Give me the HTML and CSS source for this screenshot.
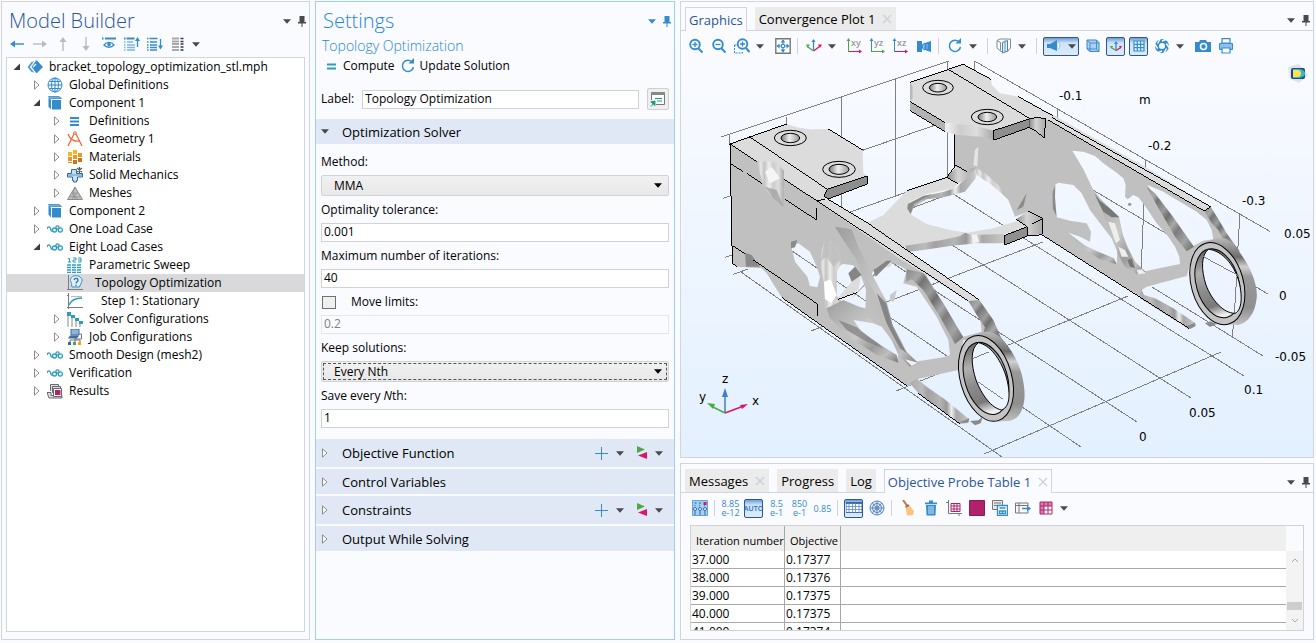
FILE: index.html
```html
<!DOCTYPE html>
<html lang="en">
<head>
<meta charset="utf-8">
<title>bracket_topology_optimization_stl.mph</title>
<link rel="stylesheet" href="styles.css">
</head>
<body>
<svg class="defs" aria-hidden="true">
  <defs>
    <symbol id="caret" viewBox="0 0 9 5"><path d="M0 0h9L4.500 5z" fill="currentColor"/></symbol>
    <symbol id="pin" viewBox="0 0 8 11"><path d="M1.500 0h5v6H8v1.500H0V6h1.500zM3.500 7h1v4h-1z" fill="currentColor"/></symbol>
    <symbol id="closed" viewBox="0 0 8 10"><path d="M1.500 .8v8.400L6 5z" fill="#fff" stroke="#8c8c8c"/></symbol>
    <symbol id="open" viewBox="0 0 8 10"><path d="M7 1.500V8H.5z" fill="#3c3c3c"/></symbol>
    <symbol id="cube" viewBox="0 0 16 16"><path d="M5 5h9v9.500H5z" fill="#348ccd"/><path d="M1.500 2 4 4.500V14.500L1.500 11.500z" fill="#348ccd"/><path d="M1.500 1.500H12L14.500 3.500H4z" fill="#6fb0e0" stroke="#348ccd" stroke-width=".8"/></symbol>
    <symbol id="study" viewBox="0 0 16 16"><path d="M0 8C.5 5.500 3 5 3.700 8S5 10.500 5.700 9" fill="none" stroke="#2a9fbc" stroke-width="1.300"/><circle cx="7.500" cy="9" r="2" fill="none" stroke="#2a9fbc" stroke-width="1.300"/><circle cx="10.500" cy="6.500" r="1.600" fill="none" stroke="#2a9fbc" stroke-width="1.300"/><circle cx="13.300" cy="9" r="2.100" fill="none" stroke="#2a9fbc" stroke-width="1.300"/></symbol>
    <symbol id="plus" viewBox="0 0 13 13"><path d="M6.500 0v13M0 6.500h13" stroke="#348ccd"/></symbol>
    <symbol id="swap" viewBox="0 0 10 14"><path d="M0 0v7l8-3.500z" fill="#4fa847"/><path d="M10 6v7L1 9.500z" fill="#dc1467"/></symbol>
    <symbol id="cross" viewBox="0 0 10 10"><path d="m1 1 8 8m0-8-8 8" stroke="#c8d1dd" stroke-width="1.300"/></symbol>
    <symbol id="refresh" viewBox="0 0 16 16"><path d="M12.500 4.500A5.600 5.600 0 1 0 13.500 9" fill="none" stroke="#348ccd" stroke-width="1.500"/><path d="M8.500 5.500H14V0z" fill="#348ccd"/></symbol>
    <linearGradient id="wall" x1="0" y1="0" x2="0" y2="1"><stop offset="0" stop-color="#666"/><stop offset=".3" stop-color="#b0b0b0"/><stop offset=".55" stop-color="#8c8c8c"/><stop offset=".8" stop-color="#7a7a7a"/><stop offset=".95" stop-color="#eee"/></linearGradient>
    <linearGradient id="outer" x1="0" y1="0" x2="0" y2="1"><stop offset="0" stop-color="#b8b8b8"/><stop offset=".22" stop-color="#6d6d6d"/><stop offset=".33" stop-color="#d0d0d0"/><stop offset=".45" stop-color="#999"/><stop offset=".8" stop-color="#8f8f8f"/><stop offset="1" stop-color="#c0c0c0"/></linearGradient>
    <linearGradient id="bore"><stop offset="0" stop-color="#777"/><stop offset=".45" stop-color="#eee"/><stop offset=".7" stop-color="#c8c8c8"/><stop offset="1" stop-color="#999"/></linearGradient>
    <linearGradient id="rough" x1="0" y1="0" x2="1" y2="0"><stop offset="0" stop-color="#b4b4b4"/><stop offset=".15" stop-color="#e8e8e8"/><stop offset=".28" stop-color="#c4c4c4"/><stop offset=".45" stop-color="#eee"/><stop offset=".6" stop-color="#cdcdcd"/><stop offset=".8" stop-color="#ddd"/><stop offset="1" stop-color="#aaa"/></linearGradient>
    <linearGradient id="rim"><stop offset="0" stop-color="#aaa"/><stop offset=".2" stop-color="#bcbcbc"/><stop offset=".3" stop-color="#a2a2a2"/><stop offset=".5" stop-color="#b5b5b5"/><stop offset=".62" stop-color="#999"/><stop offset=".7" stop-color="#eee"/><stop offset=".78" stop-color="#a8a8a8"/><stop offset="1" stop-color="#c8c8c8"/></linearGradient>
    <linearGradient id="bands" x1="0" y1="0" x2="1" y2="1"><stop offset="0" stop-color="#8a8a8a"/><stop offset=".15" stop-color="#a8a8a8"/><stop offset=".22" stop-color="#757575"/><stop offset=".36" stop-color="#9c9c9c"/><stop offset=".45" stop-color="#6f6f6f"/><stop offset=".57" stop-color="#a9a9a9"/><stop offset=".66" stop-color="#7c7c7c"/><stop offset=".82" stop-color="#a4a4a4"/><stop offset="1" stop-color="#666"/></linearGradient>
    <linearGradient id="brace" x1="0" y1="0" x2="1" y2="1"><stop offset="0" stop-color="#9c9c9c"/><stop offset=".25" stop-color="#b5b5b5"/><stop offset=".5" stop-color="#cacaca"/><stop offset=".7" stop-color="#9a9a9a"/><stop offset=".85" stop-color="#bfbfbf"/><stop offset="1" stop-color="#777"/></linearGradient>
    <linearGradient id="fillet"><stop offset="0" stop-color="#8b8b8b"/><stop offset=".4" stop-color="#d4d4d4"/><stop offset="1" stop-color="#a9a9a9"/></linearGradient>
  </defs>
</svg>

<main class="desktop">

<section class="panel builder" aria-label="Model Builder">
  <header class="title-row"><h1 class="title">Model Builder</h1>
    <button class="mini" aria-label="Menu"><svg class="caret"><use href="#caret"/></svg></button>
    <button class="mini" aria-label="Pin"><svg class="pin"><use href="#pin"/></svg></button></header>
  <div class="toolbar small-bar">
    <button class="tool" aria-label="Back"><svg class="i16" viewBox="0 0 16 16"><path d="M3 8h12" stroke="#348ccd" stroke-width="1.400"/><path d="M1 8l5-3.500v7z" fill="#348ccd"/></svg></button>
    <button class="tool" aria-label="Forward"><svg class="i16" viewBox="0 0 16 16"><path d="M1 8h12" stroke="#b9babf" stroke-width="1.400"/><path d="M15 8l-5-3.500v7z" fill="#b9babf"/></svg></button>
    <button class="tool" aria-label="Up"><svg class="i16" viewBox="0 0 16 16"><path d="M8 3v12" stroke="#b9babf" stroke-width="1.400"/><path d="M8 1l3.500 5h-7z" fill="#b9babf"/></svg></button>
    <button class="tool" aria-label="Down"><svg class="i16" viewBox="0 0 16 16"><path d="M8 1v12" stroke="#b9babf" stroke-width="1.400"/><path d="M8 15l3.500-5h-7z" fill="#b9babf"/></svg></button>
    <button class="tool" aria-label="Show"><svg class="i16" viewBox="0 0 16 16"><path d="M1 2.500h1.500m1.500 0h11" stroke="#348ccd" stroke-width="2"/><path d="M3 9c2.500-3.500 7.500-3.500 10 0-2.500 3-7.500 3-10 0z" fill="#fff" stroke="#348ccd" stroke-width="1.300"/><circle cx="8" cy="8.500" r="1.800" fill="#348ccd"/></svg></button>
    <button class="tool" aria-label="Collapse All"><svg class="i16" viewBox="0 0 16 16"><path d="M0 2.500h1.500m1 0h8" stroke="#348ccd" stroke-width="2"/><path d="M0 6h1.500M0 9h1.500M0 11.500h1.500M0 14h1.500M3 6h6M3 9h8M3 11.500h8M3 14h8" stroke="#7fb7e0" stroke-width="1.300"/><path d="M13.500 11V3" stroke="#348ccd" stroke-width="1.300"/><path d="M13.500 1 16 5h-5z" fill="#348ccd"/></svg></button>
    <button class="tool" aria-label="Expand All"><svg class="i16" viewBox="0 0 16 16"><path d="M0 2.500h1.500m1 0h8M0 6h1.500M0 9h1.500M0 11.500h1.500M0 14h1.500M3 6h7M3 9h7M3 11.500h7M3 14h7" stroke="#348ccd" stroke-width="1.400"/><path d="M13.500 3v9" stroke="#348ccd" stroke-width="1.300"/><path d="M13.500 13.500 16 9.500h-5z" fill="#348ccd"/></svg></button>
    <button class="tool" aria-label="Node Text"><svg class="i16" viewBox="0 0 16 16"><path d="M2 2.500h7M2 5.500h7M2 8h7M2 11h7M2 14h7" stroke="#aaa" stroke-width="1.800"/><path d="M10.500 2.500h3M10.500 5.500h3M10.500 8h3M10.500 11h3M10.500 14h3" stroke="#2c3e57" stroke-width="1.500"/></svg></button>
    <button class="drop" aria-label="More"><svg class="caret"><use href="#caret"/></svg></button>
  </div>
  <ul class="tree">
    <li class="node"><button class="twist" aria-label="Collapse"><svg class="arrow"><use href="#open"/></svg></button><svg class="i16" viewBox="0 0 16 16"><path d="M8 1.500h2L16 8l-6 6H8L2 8z" fill="#348ccd"/><path d="M.5 8l4-5 2.500-.5v4L5 8l2 1.500v4L4.500 13z" fill="#4f9dd6"/><path d="M8.500 1.500 3.500 8l5 6M6 8l3-3" stroke="#fff" stroke-width="1.200" fill="none"/></svg><span class="name">bracket_topology_optimization_stl.mph</span></li>
    <li class="node lvl1"><button class="twist" aria-label="Expand"><svg class="arrow"><use href="#closed"/></svg></button><svg class="i16" viewBox="0 0 16 16"><circle cx="8" cy="8" r="7" fill="#eef6fd" stroke="#348ccd"/><ellipse cx="8" cy="8" rx="3.500" ry="7" fill="none" stroke="#348ccd"/><path d="M8 1v14M1 8h14M2.500 4.500h11M2.500 11.500h11" stroke="#348ccd"/></svg><span class="name">Global Definitions</span></li>
    <li class="node lvl1"><button class="twist" aria-label="Collapse"><svg class="arrow"><use href="#open"/></svg></button><svg class="i16"><use href="#cube"/></svg><span class="name">Component 1</span></li>
    <li class="node lvl2"><button class="twist" aria-label="Expand"><svg class="arrow"><use href="#closed"/></svg></button><svg class="i16" viewBox="0 0 16 16"><path d="M3 5h9M3 8.500h9M3 12h9" stroke="#348ccd" stroke-width="1.800"/></svg><span class="name">Definitions</span></li>
    <li class="node lvl2"><button class="twist" aria-label="Expand"><svg class="arrow"><use href="#closed"/></svg></button><svg class="i16" viewBox="0 0 16 16"><path d="M1 15 7.500 2M8.500 2 15 15M1 3c2 5 6 8 12 7" fill="none" stroke="#ee6a3a" stroke-width="1.300"/><circle cx="8" cy="2" r="1.300" fill="#fff" stroke="#ee6a3a"/></svg><span class="name">Geometry 1</span></li>
    <li class="node lvl2"><button class="twist" aria-label="Expand"><svg class="arrow"><use href="#closed"/></svg></button><svg class="i16" viewBox="0 0 16 16"><path d="M6 1h4v4H6zM1 3h4v4H1z" fill="#fab41e"/><path d="M11 4h4v4h-4zM6 6h4v4H6zM1 8h4v4H1z" fill="#f2951e"/><path d="M11 9h4v4h-4zM6 11h4v4H6z" fill="#cf741c"/><path d="M1 13h4v1H1z" fill="#e08a20"/></svg><span class="name">Materials</span></li>
    <li class="node lvl2"><button class="twist" aria-label="Expand"><svg class="arrow"><use href="#closed"/></svg></button><svg class="i16" viewBox="0 0 16 16"><path d="M4.500 2.500h5v4h6V10h-5v3.500h-1V15h-3v-1.500h-1V10H.5V6.500h4z" fill="#c7ddf0" stroke="#2a6aa5"/><path d="M1 8h14" stroke="#7fb0da" stroke-width="1.500"/><path d="M12.500 0v6M10 1l5 4M10 5l5-4" stroke="#555" stroke-width="1.200"/></svg><span class="name">Solid Mechanics</span></li>
    <li class="node lvl2"><button class="twist" aria-label="Expand"><svg class="arrow"><use href="#closed"/></svg></button><svg class="i16" viewBox="0 0 16 16"><path d="M8 2 15.500 14.500H.5z" fill="#c0c0c0" stroke="#8c8c8c"/><path d="M5 8l6 0M2.500 11.500l11 .5M8 2 6 8l4 6M10 8l-5 6M5 8l3 6" stroke="#909090" fill="none" stroke-width=".8"/></svg><span class="name">Meshes</span></li>
    <li class="node lvl1"><button class="twist" aria-label="Expand"><svg class="arrow"><use href="#closed"/></svg></button><svg class="i16"><use href="#cube"/></svg><span class="name">Component 2</span></li>
    <li class="node lvl1"><button class="twist" aria-label="Expand"><svg class="arrow"><use href="#closed"/></svg></button><svg class="i16"><use href="#study"/></svg><span class="name">One Load Case</span></li>
    <li class="node lvl1"><button class="twist" aria-label="Collapse"><svg class="arrow"><use href="#open"/></svg></button><svg class="i16"><use href="#study"/></svg><span class="name">Eight Load Cases</span></li>
    <li class="node lvl2"><span class="twist"></span><svg class="i16" viewBox="0 0 16 16"><path d="M1 1.500h1.500V5M1 5h3M6 1h3v2H6v2h3M11 1h3v4h-3M11 3h3" fill="none" stroke="#2a9fbc"/><path d="M0 8h4M0 10.500h4M0 13h4M0 15.500h4M5 8h4M5 10.500h4M5 13h4M5 15.500h4M10 8h4M10 10.500h4M10 13h4M10 15.500h4" stroke="#2a9fbc" stroke-width="1.500"/></svg><span class="name">Parametric Sweep</span></li>
    <li class="node lvl2 selected"><span class="twist"></span><svg class="i16" viewBox="0 0 16 16"><path d="M1.500 0v14.500H16M0 14.500h2" fill="none" stroke="#7c7c7c"/><path d="M5.500 1.500c3-1.500 8-1 9.500 3 .5 3-2 4.500-2.500 7.500H5c-1-1 .5-3-1-5s0-4 1.500-5.500z" fill="#e4f1fb" stroke="#348ccd"/><path d="M7 5c.5-2.500 4.500-2 4 .5C10.700 7 9 6.800 9 8.500M9 9.700v1.300" fill="none" stroke="#2a6db5" stroke-width="1.300"/></svg><span class="name step1">Topology Optimization</span></li>
    <li class="node lvl2"><span class="twist"></span><svg class="i16" viewBox="0 0 16 16"><path d="M1.500 0v16M0 14.500h16M0 2.500h2" fill="none" stroke="#7c7c7c"/><path d="M2 12C4 7 8 5 15 5" fill="none" stroke="#2a9fbc" stroke-width="1.400"/><path d="M4 3.500h11" stroke="#bbb"/></svg><span class="name step2">Step 1: Stationary</span></li>
    <li class="node lvl2"><button class="twist" aria-label="Expand"><svg class="arrow"><use href="#closed"/></svg></button><svg class="i16" viewBox="0 0 16 16"><path d="M1 5v11M5 6v10M9 9v7M13 12v4" stroke="#888"/><path d="M0 1h4v4H0zM4 4h4v3H4zM8 7h4v3H8zM12 10h4v3h-4z" fill="#2a9fbc"/></svg><span class="name">Solver Configurations</span></li>
    <li class="node lvl2"><button class="twist" aria-label="Expand"><svg class="arrow"><use href="#closed"/></svg></button><svg class="i16" viewBox="0 0 16 16"><path d="M4 0h8v6H4z" fill="#8fb3de" stroke="#3f6ca6"/><path d="M3 6.500h9l-2 3H1z" fill="#3f6ca6"/><path d="M12 5h2.500v5H8M3 13v-2h10v2M8 9v4" fill="none" stroke="#777"/><path d="M1 13h3v3H1z" fill="#2d6cb0"/><path d="M6 13h3v3H6z" fill="#4fa847"/><path d="M11 13h3v3h-3z" fill="#f5a21b"/></svg><span class="name">Job Configurations</span></li>
    <li class="node lvl1"><button class="twist" aria-label="Expand"><svg class="arrow"><use href="#closed"/></svg></button><svg class="i16"><use href="#study"/></svg><span class="name">Smooth Design (mesh2)</span></li>
    <li class="node lvl1"><button class="twist" aria-label="Expand"><svg class="arrow"><use href="#closed"/></svg></button><svg class="i16"><use href="#study"/></svg><span class="name">Verification</span></li>
    <li class="node lvl1"><button class="twist" aria-label="Expand"><svg class="arrow"><use href="#closed"/></svg></button><svg class="i16" viewBox="0 0 16 16"><path d="M3.500 8V1.500h8V3M5.500 10V3.500h8V5M0 9.500h4v3h11v2.500H2z" fill="#ddd" stroke="#6a6a6a"/><path d="M6.500 5.500h8v8h-8z" fill="#fff" stroke="#6a6a6a"/><path d="M8 7h5.500v5H8z" fill="#b0226b"/></svg><span class="name">Results</span></li>
  </ul>
</section>

<section class="panel settings" aria-label="Settings">
  <header class="title-row"><h2 class="title">Settings</h2>
    <button class="mini" aria-label="Menu"><svg class="caret"><use href="#caret"/></svg></button>
    <button class="mini" aria-label="Pin"><svg class="pin"><use href="#pin"/></svg></button></header>
  <p class="subtitle">Topology Optimization</p>
  <div class="actions">
    <button class="action"><svg class="i16" viewBox="0 0 16 16"><path d="M4 6.500h9M4 10.500h9" stroke="#2a9fbc" stroke-width="2"/></svg>Compute</button>
    <button class="action"><svg class="i16"><use href="#refresh"/></svg>Update Solution</button>
  </div>
  <div class="label-row"><label for="lbl">Label:</label><input class="field" id="lbl" value="Topology Optimization">
    <button class="goto" aria-label="Go to source"><svg class="i16" viewBox="0 0 16 16"><path d="M1.500 9V1.500h13v12H6" fill="#fff" stroke="#777"/><path d="M1 1h14v3H1z" fill="#888"/><path d="M5 7.500h7M7 10h5" stroke="#1a9e86" stroke-width="1.200"/><path d="M1 15.500l3.500-4M5 10v4.500L.8 10.800z" stroke="#1a9e86" fill="#1a9e86"/></svg></button></div>
  <h3 class="section open"><button class="fold" aria-label="Collapse section"><svg class="caret"><use href="#caret"/></svg></button>Optimization Solver</h3>
  <form class="form">
    <label for="method">Method:</label>
    <div class="pick"><select id="method"><option>MMA</option></select><svg class="caret"><use href="#caret"/></svg></div>
    <label for="tol">Optimality tolerance:</label>
    <input class="field" id="tol" value="0.001">
    <label for="iter">Maximum number of iterations:</label>
    <input class="field" id="iter" value="40">
    <label class="check"><input type="checkbox" class="box">Move limits:</label>
    <input class="field" aria-label="Move limits" value="0.2" disabled>
    <label for="keep">Keep solutions:</label>
    <div class="pick focused"><select id="keep"><option>Every Nth</option></select><svg class="caret"><use href="#caret"/></svg></div>
    <label for="save">Save every <i>N</i>th:</label>
    <input class="field" id="save" value="1">
  </form>
  <div class="sections">
    <h3 class="section tall"><button class="fold" aria-label="Expand section"><svg class="arrow"><use href="#closed"/></svg></button>Objective Function
      <span class="extras"><button class="bare" aria-label="Add"><svg class="plus"><use href="#plus"/></svg></button><button class="bare" aria-label="Add menu"><svg class="caret"><use href="#caret"/></svg></button><button class="bare swap-btn" aria-label="Replace"><svg class="swap"><use href="#swap"/></svg></button><button class="bare" aria-label="Replace menu"><svg class="caret"><use href="#caret"/></svg></button></span></h3>
    <h3 class="section"><button class="fold" aria-label="Expand section"><svg class="arrow"><use href="#closed"/></svg></button>Control Variables</h3>
    <h3 class="section tall"><button class="fold" aria-label="Expand section"><svg class="arrow"><use href="#closed"/></svg></button>Constraints
      <span class="extras"><button class="bare" aria-label="Add"><svg class="plus"><use href="#plus"/></svg></button><button class="bare" aria-label="Add menu"><svg class="caret"><use href="#caret"/></svg></button><button class="bare swap-btn" aria-label="Replace"><svg class="swap"><use href="#swap"/></svg></button><button class="bare" aria-label="Replace menu"><svg class="caret"><use href="#caret"/></svg></button></span></h3>
    <h3 class="section"><button class="fold" aria-label="Expand section"><svg class="arrow"><use href="#closed"/></svg></button>Output While Solving</h3>
  </div>
</section>

<div class="right">
<section class="panel graphics" aria-label="Graphics">
  <header class="tabs">
    <button class="tab active">Graphics</button>
    <button class="tab">Convergence Plot 1<svg class="cross"><use href="#cross"/></svg></button>
    <span class="tab-tools"><button class="mini" aria-label="Menu"><svg class="caret"><use href="#caret"/></svg></button>
    <button class="mini" aria-label="Pin"><svg class="pin"><use href="#pin"/></svg></button></span>
  </header>
  <div class="toolbar">
    <button class="tool" aria-label="Zoom In"><svg class="i16" viewBox="0 0 16 16"><circle cx="7" cy="6.500" r="4.800" fill="none" stroke="#348ccd" stroke-width="1.900"/><path d="M10.500 10.500l4 4" stroke="#348ccd" stroke-width="2"/><path d="M7 4v5M4.500 6.500h5" stroke="#348ccd" stroke-width="1.300"/></svg></button>
    <button class="tool" aria-label="Zoom Out"><svg class="i16" viewBox="0 0 16 16"><circle cx="7" cy="6.500" r="4.800" fill="none" stroke="#348ccd" stroke-width="1.900"/><path d="M10.500 10.500l4 4" stroke="#348ccd" stroke-width="2"/><path d="M4.500 6.500h5" stroke="#348ccd" stroke-width="1.300"/></svg></button>
    <button class="tool" aria-label="Zoom Box"><svg class="i16" viewBox="0 0 16 16"><path d="M.5 7v8h8v-2M.5 7H3" fill="none" stroke="#348ccd" stroke-dasharray="2 1"/><circle cx="8.500" cy="6" r="4.800" fill="#fff" stroke="#348ccd" stroke-width="1.900"/><path d="M12 10l3.500 4" stroke="#348ccd" stroke-width="2"/><path d="M8.500 3.500v5M6 6h5" stroke="#348ccd" stroke-width="1.300"/></svg></button>
    <button class="drop" aria-label="Zoom options"><svg class="caret"><use href="#caret"/></svg></button>
    <button class="tool" aria-label="Zoom Extents"><svg class="i16" viewBox="0 0 16 16"><path d="M.8.8h14.400v14.400H.8z" fill="#fff" stroke="#777" stroke-width="1.400"/><path d="M8 2v12M2 8h12" stroke="#348ccd" stroke-width="1.200" stroke-dasharray="4 4"/><path d="M8 1.500l2.500 3h-5zM8 14.500l2.500-3h-5zM1.500 8l3-2.500v5zM14.500 8l-3-2.500v5z" fill="#348ccd"/><path d="M6.500 6.500h3v3h-3z" fill="none" stroke="#348ccd"/></svg></button>
    <span class="sep"></span>
    <button class="tool" aria-label="Default View"><svg class="i16" viewBox="0 0 16 16"><path d="M7.500 12V2" stroke="#348ccd" stroke-width="1.300"/><path d="M7.500 1l2 3h-4z" fill="#348ccd"/><path d="M7.500 13 2 9" stroke="#4fa847" stroke-width="1.300"/><path d="M0 6.500h4L1.500 10z" fill="#4fa847"/><path d="M7.500 13l6-4.500" stroke="#dc1467" stroke-width="1.300"/><path d="M16 6.500h-4L14 10z" fill="#dc1467"/></svg></button>
    <button class="drop" aria-label="View options"><svg class="caret"><use href="#caret"/></svg></button>
    <button class="tool plane" aria-label="View xy"><svg class="i16" viewBox="0 0 16 16"><path d="M1.500 14V2" stroke="#4fa847"/><path d="M1.500 0l2 3h-4z" fill="#4fa847"/><path d="M2 13.500h10" stroke="#dc1467"/><path d="M15 13.500l-3-2v4z" fill="#dc1467"/><text x="4" y="8" class="mark">xy</text></svg></button>
    <button class="tool plane" aria-label="View yz"><svg class="i16" viewBox="0 0 16 16"><path d="M1.500 14V2" stroke="#348ccd"/><path d="M1.500 0l2 3h-4z" fill="#348ccd"/><path d="M2 13.500h10" stroke="#4fa847"/><path d="M15 13.500l-3-2v4z" fill="#4fa847"/><text x="4" y="8" class="mark">yz</text></svg></button>
    <button class="tool plane" aria-label="View xz"><svg class="i16" viewBox="0 0 16 16"><path d="M1.500 14V2" stroke="#348ccd"/><path d="M1.500 0l2 3h-4z" fill="#348ccd"/><path d="M2 13.500h10" stroke="#dc1467"/><path d="M15 13.500l-3-2v4z" fill="#dc1467"/><text x="4" y="8" class="mark">xz</text></svg></button>
    <button class="tool" aria-label="Camera view"><svg class="i16" viewBox="0 0 16 16"><path d="M1 3h5v11H1z" fill="#348ccd"/><path d="M6.500 6.500 9 5v7l-2.500-1.500z" fill="#8cc1e8" stroke="#348ccd"/><path d="M9 5l6-2v11l-6-2z" fill="#348ccd"/><path d="M11 6v5" stroke="#8cc1e8"/></svg></button>
    <span class="sep"></span>
    <button class="tool" aria-label="Rotate"><svg class="i16"><use href="#refresh"/></svg></button>
    <button class="drop" aria-label="Rotate options"><svg class="caret"><use href="#caret"/></svg></button>
    <span class="sep"></span>
    <button class="tool" aria-label="Clipping"><svg class="i16" viewBox="0 0 16 16"><path d="M1 2.500 4 1h10.500v9l-3 3.500H5L1 10zM1 2.500l3.500 2v8" fill="none" stroke="#8a8a8a"/><path d="M6.500 4.500l5-2V13l-5 2z" fill="#e4f1fb" stroke="#348ccd"/><path d="M9 2.500v12" stroke="#8a8a8a"/></svg></button>
    <button class="drop" aria-label="Clipping options"><svg class="caret"><use href="#caret"/></svg></button>
    <span class="sep"></span>
    <button class="tool on wide" aria-label="Scene Light"><svg class="i16" viewBox="0 0 16 16"><path d="M1 6h3l7-4v11L4 10H1z" fill="#348ccd"/><path d="M12 4c2.500 1 2.500 6 0 7" fill="#fff" stroke="#8cc1e8"/></svg><svg class="caret"><use href="#caret"/></svg></button>
    <button class="tool" aria-label="Transparency"><svg class="i16" viewBox="0 0 16 16"><path d="M2 2h9.500L14 4.500v9H5L2 11z" fill="#aecff0" stroke="#348ccd"/><path d="M2 2l3 3h9M5 5v8.500M11.500 2v9H2M11.500 11l2.500 2.500" fill="none" stroke="#348ccd" stroke-width=".9"/></svg></button>
    <button class="tool on" aria-label="Show Axes"><svg class="i16" viewBox="0 0 16 16"><path d="M8 12V5" stroke="#348ccd" stroke-width="1.300"/><path d="M8 3l2 3H6z" fill="#348ccd"/><path d="M8 12.500 4 10" stroke="#4fa847" stroke-width="1.300"/><path d="M2 8h3l-1.500 3z" fill="#4fa847"/><path d="M8 12.500l4-2.500" stroke="#dc1467" stroke-width="1.300"/><path d="M14 8h-3l1.500 3z" fill="#dc1467"/></svg></button>
    <button class="tool on" aria-label="Show Grid"><svg class="i16" viewBox="0 0 16 16"><path d="M3 3h10v10H3zM3 6.300h10M3 9.600h10M6.300 3v10M9.600 3v10" fill="#eaf4fd" stroke="#348ccd" stroke-width="1.200"/></svg></button>
    <button class="tool" aria-label="Environment"><svg class="i16" viewBox="0 0 16 16"><circle cx="8" cy="8" r="5" fill="none" stroke="#348ccd" stroke-width="4"/><path d="M8 3 13 1M12.300 5.500 15.500 10M12.500 10.500 10 15M8 13 3 15M3.700 10.500.5 6M3.500 5.500 6 1" stroke="#fafbff" stroke-width="1.500"/></svg></button>
    <button class="drop" aria-label="Environment options"><svg class="caret"><use href="#caret"/></svg></button>
    <button class="tool" aria-label="Image Snapshot"><svg class="i16" viewBox="0 0 16 16"><path d="M0 4h4l1-2h6l1 2h4v10H0z" fill="#348ccd"/><circle cx="8.500" cy="8.500" r="3" fill="none" stroke="#fff" stroke-width="1.500"/></svg></button>
    <button class="tool" aria-label="Print"><svg class="i16" viewBox="0 0 16 16"><path d="M1.500 5.500h13v6h-13z" fill="#8cc1e8" stroke="#348ccd"/><path d="M4 .7h8v4.500H4zM4 10h8v5H4z" fill="#fff" stroke="#348ccd" stroke-width="1.200"/></svg></button>
  </div>

  <svg class="scene" viewBox="681 61 632 396" role="img" aria-label="Optimized bracket">
    <g class="grid">
      <path d="M721 137 955 59M729.500 135v10M786.500 117v8M841.500 97V209M895.500 79V196M947.500 62v115M862 150.500 934 125.500M850 212 950 177M723 198.500l7-2.500M725 257.500l7-2.500M733 274.500l15-5.500"/>
      <path d="M811 331 1043 242M896 391 1128 296M984 454 1221 352M741 272 1002 457M792 251 1081 447M880 255 1137 422M938 236 1191 398M950 192 1244 376M909 209l41-15"/>
      <path d="M974.500 72V61L1270 231.500M1057.500 108v10M1145.500 159v9M1240 213l-7.500 124M1144 202l-3 71M1093 190l175 104M1152 287l111 69"/>
    </g>

    <!-- rear arm -->
    <g transform="translate(1040 80) scale(.33333)">
      <g class="nostroke">
        <path class="face" fill-rule="evenodd" d="M-257 155-30 105 25 120 493 393 560 470 530 490 460 520 440 588 320 620 305 630 303 652 7 465V415L-35 395-75 410-95 360-120 335-150 295-195 265-215 278-257 260z
          M97 212 130 215 165 228 190 250 230 278 250 295 257 315 255 350 263 358 280 345 295 352 320 385 350 430 385 470 405 500 418 530 420 552 350 566 310 575 285 545 265 505 250 470 240 425 215 390 180 355 160 330 130 268z
          M322 315 370 335 420 365 470 395 500 420 515 450 520 478 490 482 455 500 400 420 360 370z
          M45 315 55 308 100 315 125 340 150 390 180 430 215 475 232 515 230 553 190 530 140 500 85 458 120 470 150 485 153 455 140 430 90 422 50 412 38 380z"/>
        <path class="lite" d="M-30 65 0 85 52 112 317 262 512 380 493 393 25 120-30 115z"/>
        <path fill="url(#bands)" d="M493 393 512 380 540 425 560 460 600 515 560 500 535 450 515 430z"/>
        <path fill="url(#bands)" d="M320 320 345 340 400 412 462 500 440 514 405 470 350 375z"/>
        <path fill="url(#brace)" d="M160 330 180 362 215 390 238 412 242 445 262 505 285 545 318 577 290 582 255 560 232 520 228 490 205 450 200 425z"/>
        <path fill="#eee" d="M205 425 225 430 240 480 228 490zM235 500 255 510 265 530 245 530zM290 570 305 568 318 580 295 583z"/>
        <path fill="#777" d="M165 345 180 362 215 390 238 412 215 412 190 395zM262 540 275 535 285 565 270 560z"/>
        <path fill="url(#brace)" d="M85 458 120 490 175 515 222 535 230 553 180 538 140 512z"/>
        <path fill="#8b8b8b" d="M38 335 46 315 45 350 50 412 38 385z"/>
        <path fill="url(#rim)" d="M303 625 312 645 345 655 400 685 467 730 460 742 445 746 300 655z"/>
        <path fill="#8b8b8b" d="M440 738 465 728 467 738 450 747zM495 730 510 724 530 732 510 741zM-45 348-40 340-50 380-70 390z"/>
        <circle cx="269" cy="373" r="5" fill="#999"/>
        <path fill="url(#rough)" d="M-195 262-165 280-125 315-105 348-145 315-190 285z"/>
      </g>
      <path class="edge" d="M37 113 512 380M25 120 493 393M7 465 447 745M493 393 512 380"/>
      <path fill="url(#outer)" d="M500 487C530 470 560 468 575 490 625 540 655 610 650 655 645 700 625 728 595 735L560 733z"/>
      <g transform="rotate(-16 532 611)">
        <ellipse class="ring" cx="532" cy="611" rx="78" ry="126"/>
        <ellipse cx="533" cy="610" rx="64" ry="106" fill="url(#wall)" stroke="#000" stroke-width="3"/>
      </g>
      <path fill="#eef4ff" stroke="#000" stroke-width="3" d="M505 508C540 510 575 545 592 590 607 630 610 690 585 700 550 700 515 660 498 615 483 570 483 525 505 508z"/>
      <path class="gridin" d="M490 530 598 588M590 590 583 700"/>
    </g>

    <!-- cross web -->
    <g transform="translate(710 100) scale(.33333)">
      <path class="lite" d="M440 385 520 345 590 272 710 232 745 250 730 265 650 282 600 305 592 325 605 345 650 372 720 390 770 398 850 385 925 362 955 378 885 402 850 407 760 405 700 420 585 437 540 500 480 510z"/>
      <path fill="url(#rim)" d="M594 312 640 288 700 276 740 262 770 232 797 205 797 235 765 275 700 292 650 298 612 320 602 342 592 325z"/>
      <path fill="#8a8a8a" d="M594 312 640 288 665 283 612 312 602 342 592 325z"/>
      <path fill="url(#fillet)" d="M710 232 735 205 797 205 765 240 742 252z"/>
      <path fill="url(#rim)" d="M585 437 700 419 750 408 765 398 785 405 882 402 882 430 800 430 720 438 640 450 592 456z"/>
      <path fill="#f2f2f2" d="M785 405 800 403 808 425 788 430z"/>
      <path class="edge" d="M590 272 710 232 745 252M710 232 733 202V100M735 195 772 215"/>
      <path fill="#868686" d="M540 470 585 437 500 520 460 560 420 600z"/>
    </g>

    <!-- rear mounting plate -->
    <g transform="translate(890 50) scale(.33333)">
      <path class="edge cut" d="M345 556 412 530V558L345 585z"/>
      <path fill="url(#fillet)" d="M378 508 415 483 457 505V552L412 558V530z"/>
      <path class="edge" d="M378 508 412 530V558H440L457 552V505L415 483M425 522 457 506"/>
      <path class="lite" d="M60 97 220 43 303 88 305 105 330 130 385 140 490 198 470 205 425 203 310 242 165 218 60 155 68 130z"/>
      <path fill="#b3b3b3" d="M60 155 165 218V245L60 180z"/>
      <path fill="url(#rough)" d="M165 218 200 222 250 226 310 242V270L290 262 200 255 165 245zM60 97 68 110V148L60 150z"/>
      <path class="edge cut" d="M310 242 418 207V232L312 270z"/>
      <path fill="url(#fillet)" d="M418 205 440 202 467 206 463 265 440 245 418 232z"/>
      <path class="edge" d="M60 97 220 43 303 88M173 57 418 205M60 155 165 218M385 140 490 198M418 232 440 245 463 265 467 206 440 202 418 207M60 182 165 245"/>
      <ellipse class="bolt" cx="144" cy="113" rx="46" ry="22"/><ellipse class="hole" cx="144" cy="113" rx="26" ry="13"/>
      <ellipse class="bolt" cx="292" cy="201" rx="48" ry="23"/><ellipse class="hole" cx="292" cy="201" rx="28" ry="14"/>
      <path fill="#e4e4e4" d="M255 300 265 290 262 350 250 345z"/>
    </g>

    <!-- front arm -->
    <g transform="translate(710 240) scale(.33333)">
      <path class="face" fill-rule="evenodd" d="M60-288 320-118 775 183 800 215 850 300 760 300 745 390 620 418 600 437H590L215 172 195 140 170 100 155 85 80 80 67 70z
        M244 20 265 10 300 35 320 80 330 110 322 142 300 138 292 110 255 65z
        M380 80 400 72 430 76 452 105 468 150 466 205 400 190 380 168z
        M490 250 515 260 545 300 565 345 560 365 510 335 440 270 430 235z
        M495 85 530 62 570 78 590 90 580 130 620 140 680 230 715 300 720 345 700 352 615 365 590 345 545 260 525 190 500 160 480 110z
        M645 98 700 130 780 185 810 230 815 275 760 290 735 260 700 195z"/>
      <path class="lite" d="M385 172 430 120 452 110 445 150 400 172z"/>
      <path fill="#858585" d="M415 100 435 80 455 105 425 125zM490 90 530 62 545 62 497 110z"/>
      <path class="edge" d="M385 178 440 158"/>
      <path fill="url(#rough)" d="M345 0 380 10 395 70 378 100 376 170 400 205 360 222 345 200 342 130 328 60z"/>
      <path fill="#bdbdbd" d="M345 0 380 10 392 60 370 80 350 50 332 62z" opacity=".85"/>
      <path fill="#fff" d="M342 125 362 118 380 165 365 190 345 178z"/>
      <path fill="url(#brace)" d="M350 205 400 180 465 208 490 250 430 240 455 275 520 320 560 345 565 368 500 345 430 300 360 235z"/>
      <path fill="#7d7d7d" d="M385 240 440 262 520 325 470 305 410 270z" opacity=".7"/>
      <path fill="url(#brace)" d="M375-40 425-32 445 20 490 110 530 185 548 255 590 335 625 370 600 380 575 355 540 290 510 235 480 190 470 140 440 60 400 0z"/>
      <path fill="#bebebe" d="M462 100 500 170 530 250 570 330 545 300 510 235 480 190z"/>
      <path fill="#858585" d="M500 160 528 190 548 260 590 340 570 325 530 250z"/>
      <path fill="#f0f0f0" d="M585 358 625 368 605 378z"/>
      <path fill="url(#bands)" d="M590 88 640 98 700 190 760 292 735 312 690 230 640 150 605 118 588 125z"/>
      <path fill="#c9c9c9" d="M540 165 560 150 552 185 540 182z"/>
      <path fill="#8a8a8a" d="M105 38 125 45 150 80 108 80zM243 5 262 0 255 22 243 25z"/>
      <path fill="url(#rim)" d="M600 430 620 415 650 440 700 475 778 538 770 550 750 552 625 460z"/>
      <path fill="#8a8a8a" d="M745 548 778 535 775 548zM780 543 805 541 818 530 812 550 795 556z"/>
      <path class="lite" d="M320-118 355-122 470-53 590 30 808 180 775 183 560 50z"/>
      <path fill="url(#bands)" d="M775 183 808 180 850 240 872 290 905 335 850 330 818 290 825 262 800 225z"/>
      <path class="edge" d="M60-288 320-118 775 183M355-122 470-53 808 180M60-288 67 70 80 80M60-230 100-205M110-200 155-170M225-122 320-60V-95M68 17 105 42M130 60 322 192V228M215 172 590 437M625 460 750 552"/>
      <path fill="url(#outer)" d="M795 285C840 262 870 280 905 335 935 380 947 440 943 480 938 515 925 538 900 542L860 545z"/>
      <g transform="rotate(-16 828 415)">
        <ellipse class="ring" cx="828" cy="415" rx="77" ry="132"/>
        <ellipse cx="828" cy="415" rx="64" ry="111" fill="url(#wall)" stroke="#000" stroke-width="3"/>
      </g>
      <path fill="#ecf4ff" stroke="#000" stroke-width="3" d="M805 308C840 315 870 355 887 405 902 455 902 500 875 510 845 505 815 465 798 420 783 375 780 325 805 308z"/>
      <path class="gridin" d="M790 355 838 335M803 425 880 478"/>
    </g>

    <!-- front mounting plate -->
    <g transform="translate(710 100) scale(.33333)">
      <path class="lite" d="M60 132 230 72 260 82 300 88 355 87 458 150 460 220 472 228 352 268 345 298 320 302z"/>
      <path class="edge cut" d="M352 268 472 228V252L355 297 342 288z"/>
      <path class="edge" d="M60 132 230 72M355 87 458 150M118 110 355 270M60 132 320 302 345 298"/>
      <path fill="url(#rough)" d="M140 183 200 186 222 212 220 320 190 295 160 258z"/>
      <path fill="#f5f5f5" d="M165 215 185 200 210 235 180 250z"/>
      <path fill="#9b9b9b" d="M165 260 200 270 220 320 190 295z" opacity=".7"/>
      <ellipse class="bolt" cx="241" cy="114" rx="48" ry="23"/><ellipse class="hole" cx="241" cy="114" rx="28" ry="14"/>
      <ellipse class="bolt" cx="387" cy="208" rx="49" ry="24"/><ellipse class="hole" cx="387" cy="208" rx="30" ry="15"/>
    </g>

    <!-- orientation triad -->
    <g fill="none" stroke-width="1.500">
      <path d="M725 413V396" stroke="#3f80c0"/><path d="M725 388l3 9h-6z" fill="#3f80c0"/>
      <path d="M725 413l16-6" stroke="#dc1467"/><path d="M748 404l-8 1 2 4z" fill="#dc1467"/>
      <path d="M725 413l-12-6" stroke="#4fa847"/><path d="M707 403l8 1-2 5z" fill="#4fa847"/>
    </g>
    <g class="axis">
      <text x="1059" y="100">-0.1</text><text x="1139" y="104">m</text><text x="1148" y="150">-0.2</text><text x="1242" y="205">-0.3</text>
      <text x="1284" y="238">0.05</text><text x="1279" y="300">0</text><text x="1275" y="361">-0.05</text><text x="1244" y="394">0.1</text>
      <text x="1189" y="417">0.05</text><text x="1139" y="441">0</text>
      <text x="722" y="383">z</text><text x="752" y="405">x</text><text x="699" y="401">y</text>
    </g>
    <g>
      <path d="M1288 67l11-3 9 11-9 8-9-4z" fill="#e2e2e4"/>
      <rect x="1291" y="68" width="14" height="11" rx="2" fill="#14489e"/>
      <path d="M1293 69h4c6 0 8 2 8 4.500s-2 4.500-8 4.500h-4z" fill="#3fb6c4"/><path d="M1293 70h4q4 0 4 3.500t-4 3.500h-4z" fill="#ffe14a"/>
    </g>
  </svg>
</section>

<section class="panel results" aria-label="Table">
  <header class="tabs">
    <button class="tab">Messages<svg class="cross"><use href="#cross"/></svg></button>
    <button class="tab">Progress</button>
    <button class="tab">Log</button>
    <button class="tab active">Objective Probe Table 1<svg class="cross"><use href="#cross"/></svg></button>
    <span class="tab-tools"><button class="mini" aria-label="Menu"><svg class="caret"><use href="#caret"/></svg></button>
    <button class="mini" aria-label="Pin"><svg class="pin"><use href="#pin"/></svg></button></span>
  </header>
  <div class="toolbar">
    <button class="tool" aria-label="Cell display"><svg class="i16" viewBox="0 0 16 16"><path d="M.5.5h15v15H.5z" fill="#a9cdea" stroke="#5ba6dc"/><path d="M2.500 3h2M7 3h2M2.500 5.500h1M7 5.500h1M12 5.500h1" stroke="#348ccd" stroke-width="1.500"/><path d="M11.500 2h3v3h-3z" fill="#dc1467"/><path d="M1.500 9a1.500 1.500 0 1 0 3 0 1.500 1.500 0 1 0-3 0M6.500 9a1.500 1.500 0 1 0 3 0 1.500 1.500 0 1 0-3 0M11.500 9a1.500 1.500 0 1 0 3 0 1.500 1.500 0 1 0-3 0M3 11v4M8 11v4M13 11v4" stroke="#2a6db5" fill="#fff"/></svg></button>
    <span class="sep"></span>
    <button class="tool num"><span>8.85</span><span>e-12</span></button>
    <button class="tool num on auto">AUTO</button>
    <button class="tool num"><span>8.5</span><span>e-1</span></button>
    <button class="tool num"><span>850</span><span>e-1</span></button>
    <button class="tool num">0.85</button>
    <span class="sep"></span>
    <button class="tool on" aria-label="Table view"><svg class="i16" viewBox="0 0 16 16"><path d="M0 2.500h16v10H0z" fill="#fff" stroke="#3f6ca6"/><path d="M0 3h16" stroke="#3f6ca6" stroke-width="2"/><path d="M0 6.500h16M0 9.500h16M3 3v10M6.500 3v10M9.500 3v10M13 3v10" stroke="#5b8cc4" stroke-width=".8"/></svg></button>
    <button class="tool" aria-label="Polar view"><svg class="i16" viewBox="0 0 16 16"><circle cx="8" cy="8" r="7" fill="#dce8f6" stroke="#5b86bd"/><circle cx="8" cy="8" r="4.500" fill="none" stroke="#5b86bd"/><circle cx="8" cy="8" r="2" fill="none" stroke="#5b86bd"/><path d="M8 1v14M1 8h14M3 3l10 10M13 3 3 13" stroke="#5b86bd" stroke-width=".8"/></svg></button>
    <span class="sep"></span>
    <button class="tool" aria-label="Clear Table"><svg class="i16" viewBox="0 0 16 16"><path d="M3 0l5 7" stroke="#c07a30" stroke-width="2"/><path d="M5.500 7 9 5l5 6-1 4-6 0.500z" fill="#fbc37b"/><path d="M5.500 7 9 5" stroke="#777" stroke-width="1.500"/></svg></button>
    <button class="tool" aria-label="Delete"><svg class="i16" viewBox="0 0 16 16"><path d="M2 2.500h12v1.800H2zM6 .5h4v2H6zM3 5h10l-.5 10.500h-9z" fill="#348ccd"/><path d="M6 6v8M8 6v8M10 6v8" stroke="#cfe4f6"/></svg></button>
    <button class="tool" aria-label="Table graph"><svg class="i16" viewBox="0 0 16 16"><path d="M2.500 0v13.500H16M0 2.500h2M13 14v2" fill="none" stroke="#777"/><path d="M5 3.500h9v8H5zM5 6h9M5 9h9M8 3.500v8M11 3.500v8" fill="#fff" stroke="#b0226b"/></svg></button>
    <button class="tool" aria-label="Surface"><svg class="i16" viewBox="0 0 16 16"><path d="M.5.5h15v15H.5z" fill="#b0226b" stroke="#8e1b56"/></svg></button>
    <button class="tool" aria-label="Copy Table"><svg class="i16" viewBox="0 0 16 16"><path d="M.5.5h10v9H.5zM2 3h7M2 5.500h4" fill="#e8e8e8" stroke="#777"/><path d="M5.500 5.500h10v10h-10zM7.500 8h6M7.500 11h6v2.500h-6zM10.500 11v2.500" fill="#fff" stroke="#348ccd" stroke-width="1.300"/></svg></button>
    <button class="tool" aria-label="Export"><svg class="i16" viewBox="0 0 16 16"><path d="M13 6V3H.5v10H13v-2M.5 5.500H13M4 3v10" fill="none" stroke="#777"/><path d="M7 8.500h6" stroke="#348ccd" stroke-width="1.500"/><path d="M16 8.500l-4-3v6z" fill="#348ccd"/></svg></button>
    <button class="tool" aria-label="Add to table"><svg class="i16" viewBox="0 0 16 16"><path d="M2 2h12v12H2z" fill="#fff"/><path d="M2 2h12v4H6v8H2z" fill="#d77fac"/><path d="M2 2h12v12H2zM2 6h12M2 10h12M6 2v12M10 2v12" fill="none" stroke="#b0226b"/></svg></button>
    <button class="drop" aria-label="Table options"><svg class="caret"><use href="#caret"/></svg></button>
  </div>
  <div class="table-frame">
    <table class="data">
      <thead><tr><th class="iter">Iteration number</th><th class="obj">Objective</th><th></th></tr></thead>
      <tbody>
        <tr><td>37.000</td><td>0.17377</td><td></td></tr>
        <tr><td>38.000</td><td>0.17376</td><td></td></tr>
        <tr><td>39.000</td><td>0.17375</td><td></td></tr>
        <tr><td>40.000</td><td>0.17375</td><td></td></tr>
        <tr><td>41.000</td><td>0.17374</td><td></td></tr>
      </tbody>
    </table>
    <div class="scrollbar"><svg class="chev" viewBox="0 0 8 6"><path d="M1 5l3-3 3 3" fill="none" stroke="#a8a8a8"/></svg><span class="thumb"></span><svg class="chev" viewBox="0 0 8 6"><path d="M1 1l3 3 3-3" fill="none" stroke="#a8a8a8"/></svg></div>
  </div>
</section>
</div>
</main>
</body>
</html>
```

FILE: styles.css
```css
* { box-sizing: border-box; }
html, body { height: 100%; }
body {
  margin: 0;
  background: #fafbff;
  color: #000;
  font: 12px/16px "Open Sans", "Noto Sans", sans-serif;
}
button, input, select { font: inherit; color: inherit; }
button { border: 0; background: none; padding: 0; display: flex; align-items: center; justify-content: center; }
h1, h2, h3, p, ul { margin: 0; padding: 0; font-weight: 400; }
ul { list-style: none; }
svg { display: block; flex: none; }
.defs { position: absolute; width: 0; height: 0; }

.desktop {
  display: grid;
  grid-template-columns: 309fr 360fr 634fr;
  gap: 5px;
  height: 100vh;
  padding: 1px 2px 3px 1px;
}
.right { display: grid; grid-template-rows: 457fr 177fr; gap: 5px; min-width: 0; min-height: 0; }
.panel {
  display: flex;
  flex-direction: column;
  min-width: 0;
  min-height: 0;
  border: 1px solid #d2d5dc;
  overflow: hidden;
}

/* icon sizes */
.i16 { width: 16px; height: 16px; }
.caret { width: 8px; height: 5px; color: #4a4a4a; }
.pin { width: 8px; height: 11px; color: #4a4a4a; }
.arrow { width: 8px; height: 10px; }
.cross { width: 10px; height: 10px; margin-left: 7px; }
.plus { width: 13px; height: 13px; }
.swap { width: 10px; height: 14px; }
.chev { width: 8px; height: 6px; }

/* titles */
.title-row { display: flex; align-items: center; padding: 4px 0 0 7px; height: 34px; }
.title { flex: 1; font-size: 20px; line-height: 28px; font-weight: 300; color: #2b579a; }
.mini { width: 15px; height: 16px; }
.settings { border-color: #9fcff5; }
.settings .title { color: #1e87e0; }
.settings .title-row .caret, .settings .title-row .pin { color: #348ccd; }

/* toolbars */
.toolbar { display: flex; align-items: center; height: 30px; padding: 0 0 0 3px; flex: none; }
.small-bar { height: 16px; margin-bottom: 5px; }
.tool { width: 23px; height: 19px; flex: none; }
.drop { width: 18px; height: 19px; flex: none; justify-content: flex-start; padding-left: 3px; }
.sep { width: 1px; height: 16px; margin: 0 4px 0 3px; background: #cfd3d9; flex: none; }
.on { width: 19px; margin: 0 2px; border: 1px solid #2b579a; border-radius: 2px; background: linear-gradient(#6e9fd4, #cfe4fa 30%, #d9ebfc); }
.wide { width: 36px; gap: 6px; }
.num { flex-direction: column; color: #348ccd; font-size: 9px; line-height: 9px; }
.auto { font-size: 7px; font-weight: 600; color: #2b6cb8; }
.plane .i16 { overflow: visible; }
.mark { font: 600 9px "Open Sans", sans-serif; fill: #999; }

/* model tree */
.tree { flex: 1; margin: 0 4px 7px 4px; border: 1px solid #d2d5dc; background: #fff; overflow: hidden; }
.node { display: flex; align-items: center; height: 18px; padding-left: 4px; white-space: nowrap; }
.lvl1 { padding-left: 24px; }
.lvl2 { padding-left: 44px; }
.twist { width: 12px; height: 16px; margin-right: 4px; flex: none; }
.name { padding-left: 6px; }
.step1 { padding-left: 12px; }
.step2 { padding-left: 18px; }
.selected { background: #d9d9dc; }

/* settings */
.subtitle { padding-left: 6px; font-size: 14px; line-height: 20px; font-weight: 300; color: #1e87e0; }
.actions { display: flex; gap: 5px; padding: 1px 7px; height: 20px; }
.action { gap: 4px; }
.label-row { display: flex; align-items: center; gap: 8px; padding: 0 5px; margin: 12px 0 9px; height: 22px; }
.field { flex: 1; min-width: 0; height: 19px; border: 1px solid #d0d2d6; background: #fff; padding: 0 2px 2px; border-radius: 0; }
.field:disabled { border-color: #e4e6ea; background: #fafbff; color: #7f7f7f; }
.goto { width: 22px; height: 22px; border: 1px solid #cfcfcf; border-radius: 2px; background: #efefef; }
.section { display: flex; align-items: center; height: 25px; background: #dfe8f4; font-size: 13px; line-height: 18px; }
.section.tall { height: 28px; }
.fold { width: 18px; height: 18px; margin-right: 8px; }
.form { display: flex; flex-direction: column; padding: 10px 5px 11px 5px; }
.form > .field { flex: none; margin: 5px 0 6px; }
.form > .field:last-child { margin-bottom: 0; }
.pick { position: relative; margin: 5px 0 6px; height: 21px; }
.pick select { width: 100%; height: 21px; padding: 0 8px 0 12px; border: 1px solid #d0d2d6; border-radius: 2px; background: linear-gradient(#f1f1f1, #e8e8e8); appearance: none; }
.pick .caret { position: absolute; right: 7px; top: 8px; color: #000; pointer-events: none; }
.focused select { outline: 1px dashed #555; outline-offset: -3px; }
.check { display: flex; align-items: center; gap: 15px; }
.box { appearance: none; width: 14px; height: 13px; margin: 0 0 0 1px; border: 1px solid #707070; background: #efefef; }
.sections { display: flex; flex-direction: column; gap: 2px; }
.extras { display: flex; align-items: center; margin-left: auto; padding-right: 11px; gap: 8px; }
.swap-btn { margin-left: 5px; }

/* tabs */
.tabs { display: flex; align-items: flex-end; height: 29px; padding-left: 4px; gap: 8px; border-bottom: 1px solid #d2d5dc; flex: none; }
.tab { height: 23px; padding: 0 4px; background: #ebebeb; font-size: 13px; line-height: 18px; white-space: nowrap; }
.tab.active { margin-bottom: -1px; height: 24px; padding: 0 3px; background: #fafbff; border: 1px solid #d2d5dc; border-bottom: 0; color: #2b579a; }
.tab-tools { display: flex; margin-left: auto; padding-bottom: 2px; }

/* 3D view */
.graphics { background: linear-gradient(#fafbff 8%, #e3f0ff); }
.graphics .tabs { background: #fafbff; }
.scene { flex: 1; width: 100%; min-height: 0; }
.grid path, .gridin { fill: none; stroke: #808080; stroke-width: 1; shape-rendering: crispEdges; }
.gridin { stroke-width: 3; }
.edge { stroke: #000; stroke-width: 3; fill: none; shape-rendering: crispEdges; }
.edge.cut { fill: #8f8f8f; }
.face { fill: #c0c0c0; }
.lite { fill: #dcdcdc; }
.ring { fill: #c4c4c4; stroke: #000; stroke-width: 3; }
.bolt { fill: none; stroke: #000; stroke-width: 3; }
.hole { fill: url(#bore); stroke: #000; stroke-width: 3; }
.axis { font: 12px "DejaVu Sans", sans-serif; }

/* result table */
.results .toolbar { padding-left: 7px; }
.table-frame { display: flex; flex: 1; min-height: 0; margin: 2px 9px 8px 9px; border: 1px solid #d0d2d6; overflow: hidden; }
.data { flex: 1; width: 100%; min-width: 0; border-collapse: separate; border-spacing: 0; table-layout: fixed; align-self: flex-start; background: #fff; }
.data th { height: 25px; padding: 4px 0 0 5px; background: #efefef; border-right: 1px solid #a8a8a8; font-size: 11px; font-weight: 400; text-align: left; white-space: nowrap; }
.data .iter { width: 94px; }
.data .obj { width: 56px; }
.data td { height: 18px; padding: 0 0 0 1px; border-bottom: 1px solid #a8a8a8; border-right: 1px solid #a8a8a8; }
.data th:last-child, .data td:last-child { border-right: 0; }
.scrollbar { display: flex; flex: none; flex-direction: column; align-items: center; width: 17px; margin-top: 25px; padding: 6px 0; background: #f3f3f3; }
.thumb { width: 15px; height: 8px; margin: auto 0 8px; background: #cdcdcd; }
```
